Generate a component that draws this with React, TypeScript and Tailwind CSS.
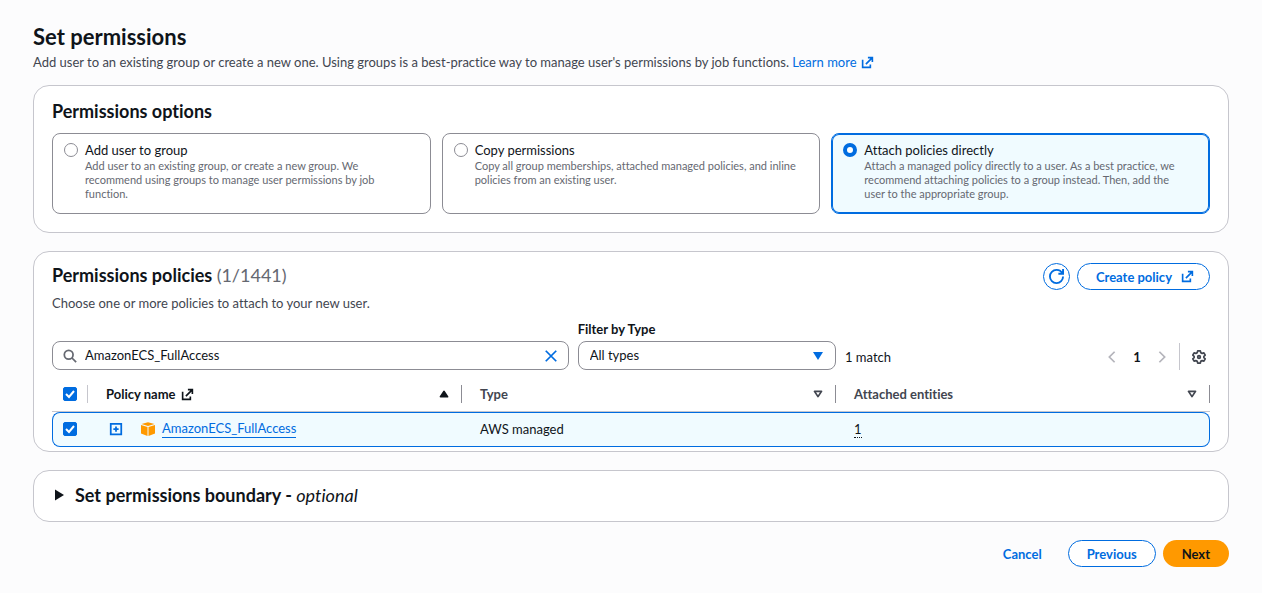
import React, { useState } from 'react';
import clsx from 'clsx';

type IconProps = { className?: string };

const ExternalIcon: React.FC<IconProps> = ({ className }) => (
  <svg viewBox="0 0 16 16" className={clsx('h-[13px] w-[13px] shrink-0', className)} fill="none" stroke="currentColor" strokeWidth="2" aria-hidden="true">
    <path d="M8.500 2H14v5.500M6 10l8-8M2 4.500V14h9.500v-3.500" />
  </svg>
);

const RefreshIcon: React.FC<IconProps> = ({ className }) => (
  <svg viewBox="0 0 16 16" className={clsx('h-[15px] w-[15px]', className)} fill="none" stroke="currentColor" strokeWidth="2" aria-hidden="true">
    <path d="M10 5h5V0M15 8a6.957 6.957 0 0 1-7 7 6.957 6.957 0 0 1-7-7 6.957 6.957 0 0 1 7-7 6.870 6.870 0 0 1 6.300 4" />
  </svg>
);

const SearchIcon: React.FC<IconProps> = ({ className }) => (
  <svg viewBox="0 0 16 16" className={clsx('h-[14px] w-[14px] shrink-0', className)} fill="none" stroke="currentColor" strokeWidth="2" aria-hidden="true">
    <circle cx="6.500" cy="6.500" r="5" />
    <path d="m15 15-5-5" />
  </svg>
);

const CloseIcon: React.FC<IconProps> = ({ className }) => (
  <svg viewBox="0 0 16 16" className={clsx('h-[14px] w-[14px]', className)} fill="none" stroke="currentColor" strokeWidth="2" aria-hidden="true">
    <path d="m2 2 12 12M14 2 2 14" />
  </svg>
);

const ChevronIcon: React.FC<IconProps> = ({ className }) => (
  <svg viewBox="0 0 16 16" className={clsx('h-[14px] w-[14px]', className)} fill="none" stroke="currentColor" strokeWidth="2" aria-hidden="true">
    <path d="m5 2 6 6-6 6" />
  </svg>
);

const GearIcon: React.FC<IconProps> = ({ className }) => (
  <svg viewBox="0 0 16 16" className={clsx('h-[14px] w-[14px]', className)} fill="none" stroke="currentColor" strokeWidth="2" strokeLinejoin="round" aria-hidden="true">
    <path d="M6.500 1h3l.5 2 1.600.9 2-.6 1.500 2.600-1.500 1.300v1.600l1.500 1.300-1.500 2.600-2-.6-1.600.9-.5 2h-3l-.5-2-1.600-.9-2 .6-1.500-2.600 1.500-1.300V7.200L.9 5.900l1.500-2.600 2 .6L6 3z" />
    <circle cx="8" cy="8" r="1.500" />
  </svg>
);

const SortIcon: React.FC<{ direction?: 'asc' }> = ({ direction }) => (
  <svg viewBox="0 0 16 16" className="h-[14px] w-[14px] shrink-0" fill={direction ? 'currentColor' : 'none'} stroke="currentColor" strokeWidth="2" strokeLinejoin="round" aria-hidden="true">
    {direction ? <path d="M4 11h8L8 5z" /> : <path d="M4 5h8l-4 6z" />}
  </svg>
);

const PolicyIcon: React.FC = () => (
  <svg viewBox="0 0 16 16" className="h-4 w-4 shrink-0" aria-hidden="true">
    <path fill="#ff9900" d="M8 1.200 14.500 3 8 5 1.500 3zM1 4l6.500 2.100v9L1 12.600zM15 4 8.500 6.100v9L15 12.600z" />
  </svg>
);

const Checkbox: React.FC<{ label: string; checked: boolean; onChange: () => void }> = ({ label, checked, onChange }) => (
  <span className="inline-grid h-[14px] w-[14px] align-middle">
    <input
      type="checkbox"
      aria-label={label}
      checked={checked}
      onChange={onChange}
      className="col-start-1 row-start-1 h-[14px] w-[14px] appearance-none rounded-[2px] border border-[#8c8c94] bg-white checked:border-[#006ce0] checked:bg-[#006ce0]"
    />
    {checked && (
      <svg viewBox="0 0 14 14" className="pointer-events-none col-start-1 row-start-1" fill="none" stroke="white" strokeWidth="2" aria-hidden="true">
        <path d="m3 7 3 3 5-6" />
      </svg>
    )}
  </span>
);

const OPTIONS = [
  {
    id: 'group',
    title: 'Add user to group',
    description: 'Add user to an existing group, or create a new group. We recommend using groups to manage user permissions by job function.',
  },
  {
    id: 'copy',
    title: 'Copy permissions',
    description: 'Copy all group memberships, attached managed policies, and inline policies from an existing user.',
  },
  {
    id: 'attach',
    title: 'Attach policies directly',
    description: 'Attach a managed policy directly to a user. As a best practice, we recommend attaching policies to a group instead. Then, add the user to the appropriate group.',
  },
];

const App: React.FC = () => {
  const [option, setOption] = useState('attach');
  const [query, setQuery] = useState('AmazonECS_FullAccess');
  const [selected, setSelected] = useState(true);
  const toggle = () => setSelected((s) => !s);

  return (
    <main className="min-h-screen bg-[#fcfcfd] px-[33px] pt-[23px] pb-6 font-[Lato,'Noto_Sans',sans-serif] text-[13px] leading-[18px] text-[#0f141a] [font-variant-ligatures:none]">
      <h1 className="text-[22px] leading-[28px] font-bold">Set permissions</h1>
      <p className="mt-[2px] text-[#424650]">
        Add user to an existing group or create a new one. Using groups is a best-practice way to manage user's permissions by job functions.{' '}
        <a href="#learn-more" className="inline-flex items-center gap-1 text-[#006ce0]">
          Learn more
          <ExternalIcon />
        </a>
      </p>

      {/* Permissions options */}
      <section className="mt-[14px] rounded-2xl border border-[#c6c6cd] bg-white px-[18px] pt-[14px] pb-[18px]">
        <h2 className="text-[18px] leading-[22px] font-bold">Permissions options</h2>
        <div role="radiogroup" aria-label="Permissions options" className="mt-[11px] grid grid-cols-3 gap-[11px]">
          {OPTIONS.map((o) => (
            <label
              key={o.id}
              className={clsx(
                'flex gap-[7px] rounded-lg border pt-[7px] pr-5 pb-3 pl-[11px]',
                option === o.id ? 'border-[#006ce0] bg-[#f0fbff] ring-1 ring-[#006ce0] ring-inset' : 'border-[#8c8c94] bg-white'
              )}
            >
              <input
                type="radio"
                name="permissions-option"
                aria-label={o.title}
                checked={option === o.id}
                onChange={() => setOption(o.id)}
                className="mt-[2px] h-[14px] w-[14px] shrink-0 appearance-none rounded-full border border-[#8c8c94] bg-white checked:border-4 checked:border-[#006ce0]"
              />
              <span>
                <span className="block">{o.title}</span>
                <span className="block text-[11px] leading-[14px] text-[#656871]">{o.description}</span>
              </span>
            </label>
          ))}
        </div>
      </section>

      {/* Permissions policies */}
      <section className="mt-[18px] rounded-2xl border border-[#c6c6cd] bg-white px-[18px] pt-[11px] pb-1">
        <div className="flex items-start justify-between">
          <h2 className="pt-px text-[18px] leading-[22px] font-bold">
            Permissions policies <span className="font-normal text-[#656871]">(1/1441)</span>
          </h2>
          <div className="flex gap-[7px]">
            <button type="button" aria-label="Refresh" className="flex h-[27px] w-[27px] items-center justify-center rounded-full border border-[#006ce0] text-[#006ce0]">
              <RefreshIcon />
            </button>
            <button type="button" className="flex h-[27px] items-center gap-[9px] rounded-full border border-[#006ce0] pr-[15px] pl-[18px] font-bold text-[#006ce0]">
              Create policy
              <ExternalIcon />
            </button>
          </div>
        </div>
        <p className="mt-1 text-[#424650]">Choose one or more policies to attach to your new user.</p>

        <div className="mt-2 flex items-end gap-[9px]">
          <div className="min-w-0 flex-[2]">
            <div className="flex h-[29px] items-center gap-2 rounded-lg border border-[#8c8c94] bg-white px-[10px]">
              <SearchIcon className="text-[#656871]" />
              <input
                type="text"
                aria-label="Search policies"
                value={query}
                onChange={(e) => setQuery(e.target.value)}
                className="min-w-0 flex-1 bg-transparent pb-[2px] outline-none"
              />
              <button type="button" aria-label="Clear search" onClick={() => setQuery('')} className="text-[#006ce0]">
                <CloseIcon />
              </button>
            </div>
          </div>
          <div className="flex min-w-0 flex-1 flex-col gap-[3px]">
            <label htmlFor="type-filter" className="font-bold">Filter by Type</label>
            <div className="grid items-center">
              <select id="type-filter" className="col-start-1 row-start-1 h-[29px] w-full appearance-none rounded-lg border border-[#8c8c94] bg-white px-[11px] pb-[2px]">
                <option>All types</option>
              </select>
              <svg viewBox="0 0 10 8" className="pointer-events-none col-start-1 row-start-1 mr-[13px] h-2 w-[10px] justify-self-end fill-[#006ce0]" aria-hidden="true">
                <path d="M0 0h10L5 8z" />
              </svg>
            </div>
          </div>
          <div className="flex h-[27px] w-[365px] items-center justify-between">
            <span>1 match</span>
            <div className="flex h-full items-center">
              <button type="button" aria-label="Previous page" disabled className="text-[#b4b4bb]"><ChevronIcon className="rotate-180" /></button>
              <button type="button" aria-current="page" className="w-9 text-center font-bold">1</button>
              <button type="button" aria-label="Next page" disabled className="text-[#b4b4bb]"><ChevronIcon /></button>
              <span className="ml-[10px] h-full w-px bg-[#c6c6cd]" />
              <button type="button" aria-label="Preferences" className="mr-1 ml-3 text-[#424650]"><GearIcon /></button>
            </div>
          </div>
        </div>

        <table className="mt-[7px] w-full table-fixed border-separate border-spacing-0 text-left">
          <thead>
            <tr className="h-[35px] text-[#424650]">
              <th className="w-9 border-b border-[#c6c6cd]">
                <div className="flex h-[18px] items-center border-r border-[#c6c6cd] pl-[11px]">
                  <Checkbox label="Select all policies" checked={selected} onChange={toggle} />
                </div>
              </th>
              <th className="border-b border-[#c6c6cd] text-[#0f141a]">
                <div className="flex h-[18px] items-center justify-between border-r border-[#8c8c94] pr-[10px] pl-[18px]">
                  <span className="flex items-center gap-[6px]">Policy name <ExternalIcon /></span>
                  <SortIcon direction="asc" />
                </div>
              </th>
              {['Type', 'Attached entities'].map((name) => (
                <th key={name} className="border-b border-[#c6c6cd]">
                  <div className="flex h-[18px] items-center justify-between border-r border-[#8c8c94] pr-[10px] pl-[18px]">
                    {name}
                    <SortIcon />
                  </div>
                </th>
              ))}
            </tr>
          </thead>
          <tbody>
            <tr className="h-[35px] [&>td]:border-y [&>td]:border-[#006ce0] [&>td]:bg-[#f0fbff] [&>td]:pb-[2px]">
              <td className="rounded-l-lg border-l">
                <div className="flex items-center pl-[10px]">
                  <Checkbox label="Select AmazonECS_FullAccess" checked={selected} onChange={toggle} />
                </div>
              </td>
              <td>
                <div className="flex items-center pl-[21px]">
                  <button type="button" aria-label="Expand AmazonECS_FullAccess" className="text-[#006ce0]">
                    <svg viewBox="0 0 16 16" className="h-[14px] w-[14px]" fill="none" stroke="currentColor" strokeWidth="2" aria-hidden="true">
                      <path d="M2 2h12v12H2zM5 8h6M8 5v6" />
                    </svg>
                  </button>
                  <span className="mr-[6px] ml-[17px]"><PolicyIcon /></span>
                  <a href="#policy" className="border-b border-[#006ce0] text-[#006ce0]">AmazonECS_FullAccess</a>
                </div>
              </td>
              <td className="pl-[18px]">AWS managed</td>
              <td className="rounded-r-lg border-r pl-[18px]">
                <span className="border-b border-dotted border-[#0f141a]">1</span>
              </td>
            </tr>
          </tbody>
        </table>
      </section>

      {/* Permissions boundary */}
      <section className="mt-[18px] rounded-2xl border border-[#c6c6cd] bg-white px-[18px] pt-[13px] pb-[15px]">
        <h2 className="text-[18px] leading-[22px] font-bold">
          <button type="button" aria-expanded="false" className="flex items-center gap-[9px]">
            <svg viewBox="0 0 14 14" className="h-[14px] w-[14px]" fill="currentColor" aria-hidden="true">
              <path d="M3 1.500v11l9-5.500z" />
            </svg>
            <span>Set permissions boundary - <i className="font-normal">optional</i></span>
          </button>
        </h2>
      </section>

      <div className="mt-[18px] flex justify-end gap-[7px] font-bold">
        <button type="button" className="h-[27px] px-[19px] text-[#006ce0]">Cancel</button>
        <button type="button" className="h-[27px] rounded-full border border-[#006ce0] bg-white px-[18px] text-[#006ce0]">Previous</button>
        <button type="button" className="h-[27px] rounded-full bg-[#ff9900] px-[19px]">Next</button>
      </div>
    </main>
  );
};

export default App;
